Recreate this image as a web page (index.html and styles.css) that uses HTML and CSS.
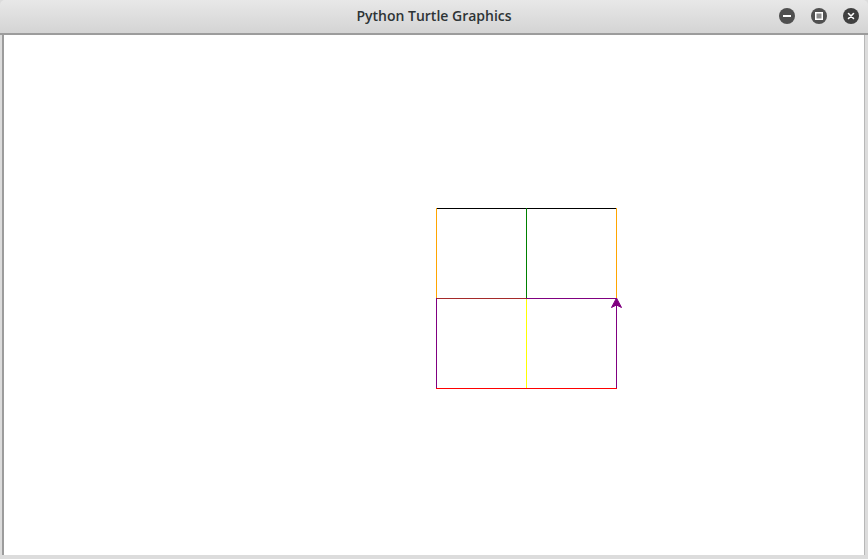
FILE: index.html
```html
<!DOCTYPE html>
<html>
<head>
<meta charset="utf-8">
<link rel="stylesheet" href="styles.css">
</head>
<body>
<div class="window">
  <div class="titlebar">
    <div class="title">Python Turtle Graphics</div>
    <div class="controls">
      <span class="btn">
        <svg width="16" height="16" viewBox="0 0 16 16"><circle cx="8" cy="8" r="8" fill="#505050"/><rect x="4" y="7" width="8" height="2" fill="#fff"/></svg>
      </span>
      <span class="btn">
        <svg width="16" height="16" viewBox="0 0 16 16"><circle cx="8" cy="8" r="8" fill="#505050"/><rect x="4.75" y="4.75" width="6.5" height="6.5" fill="#8a8a8a" stroke="#fff" stroke-width="1.5"/></svg>
      </span>
      <span class="btn">
        <svg width="16" height="16" viewBox="0 0 16 16"><circle cx="8" cy="8" r="8" fill="#404040"/><path d="M5.5 5.5 L10.5 10.5 M10.5 5.5 L5.5 10.5" stroke="#fff" stroke-width="1.6" stroke-linecap="round"/></svg>
      </span>
    </div>
  </div>
  <div class="body">
    <div class="canvas">
      <svg class="drawing" width="868" height="559" viewBox="0 0 868 559">
        <g fill="none" stroke-width="1" shape-rendering="crispEdges">
          <line x1="436" y1="208.5" x2="617" y2="208.5" stroke="#000000"/>
          <line x1="436.5" y1="208" x2="436.5" y2="298" stroke="#ffa500"/>
          <line x1="616.5" y1="208" x2="616.5" y2="298" stroke="#ffa500"/>
          <line x1="526.5" y1="208" x2="526.5" y2="298" stroke="#008000"/>
          <line x1="437" y1="298.5" x2="526" y2="298.5" stroke="#a52a2a"/>
          <line x1="526" y1="298.5" x2="617" y2="298.5" stroke="#800080"/>
          <line x1="436.5" y1="298" x2="436.5" y2="388" stroke="#800080"/>
          <line x1="616.5" y1="298" x2="616.5" y2="388" stroke="#800080"/>
          <line x1="526.5" y1="299" x2="526.5" y2="388" stroke="#ffff00"/>
          <line x1="436" y1="388.5" x2="617" y2="388.5" stroke="#ff0000"/>
        </g>
        <polygon points="616.5,298 611.5,307.5 616.5,305 621.5,307.5" fill="#800080" stroke="#800080" stroke-width="1"/>
      </svg>
    </div>
  </div>
</div>
</body>
</html>
```
FILE: styles.css
```css
html, body {
  margin: 0;
  padding: 0;
  background: #ffffff;
  overflow: hidden;
}
.window {
  width: 868px;
  height: 559px;
  display: flex;
  flex-direction: column;
  background: #dcdcdc;
}
.titlebar {
  height: 33px;
  border-bottom: 2px solid #9c9c9c;
  border-radius: 5px 5px 0 0;
  background: linear-gradient(#e8e8e8, #d4d4d4);
  position: relative;
  display: flex;
  align-items: center;
  justify-content: center;
}
.title {
  font-family: "Open Sans", "Noto Sans", sans-serif;
  font-weight: 600;
  font-size: 14px;
  color: #2e3436;
  margin-top: -3px;
}
.controls {
  position: absolute;
  right: 9px;
  top: 8px;
  display: flex;
  gap: 16px;
}
.btn {
  width: 16px;
  height: 16px;
  display: block;
}
.btn svg {
  display: block;
}
.body {
  flex: 1;
  display: flex;
  padding: 0 3px 4px 2px;
}
.canvas {
  flex: 1;
  background: #ffffff;
  border-left: 2px solid #9c9c9c;
  border-right: 1px solid #b8b8b8;
  position: relative;
  overflow: hidden;
}
.drawing {
  position: absolute;
  left: -4px;
  top: 0;
  margin-top: -35px;
}
```
